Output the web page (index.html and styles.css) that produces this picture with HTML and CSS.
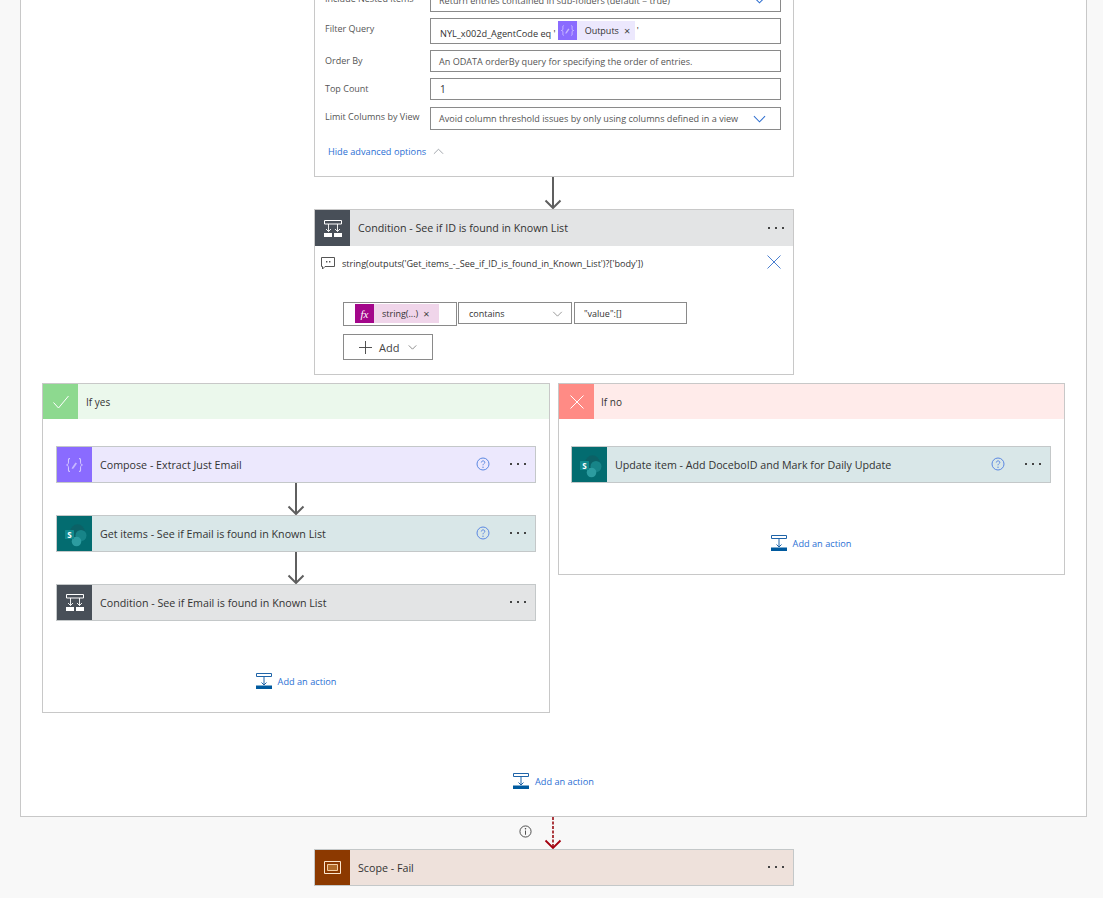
FILE: index.html
```html
<!DOCTYPE html>
<html lang="en">
<head>
<meta charset="utf-8">
<title>Flow designer</title>
<link rel="stylesheet" href="styles.css">
</head>
<body>
<svg class="defs" width="0" height="0" aria-hidden="true">
  <symbol id="i-condition" viewBox="0 0 18 17">
    <path d="M.5.5h17v3.500H.5z" fill="none" stroke="#fff"/>
    <path d="M4.500 4v7.500M13.500 4v7.500M2 9l2.500 2.500L7 9M11 9l2.500 2.500L16 9" fill="none" stroke="#fff" stroke-width=".9"/>
    <path d="M0 13h8v4H0zM10 13h8v4h-8z" fill="#fff"/>
  </symbol>
  <symbol id="i-compose" viewBox="0 0 17 14">
    <path d="M4 .5C2 .5 2.500 2 2.500 4S2.500 6.500.5 7c2 .5 2 1 2 3s-.5 3.500 1.500 3.500M13 .5c2 0 1.500 1.500 1.500 3.500s0 2.500 2 3c-2 .5-2 1-2 3s.5 3.500-1.500 3.500" fill="none" stroke="#d3c6ff" stroke-width="1.100"/>
    <path d="M6 9.500l3.500-5 1.500 1-3.500 5-1.800.6z" fill="#c6b6ff"/>
  </symbol>
  <symbol id="i-sharepoint" viewBox="0 0 26 26">
    <circle cx="15.500" cy="10.500" r="7.200" fill="#0b6166"/>
    <circle cx="19" cy="14.500" r="5.500" fill="#178488"/>
    <circle cx="14.500" cy="20.500" r="4.800" fill="#2c9ca0"/>
    <rect x="3" y="9" width="9" height="9" rx=".6" fill="#108a8e"/>
    <text x="7.500" y="16.500" text-anchor="middle" class="sp-letter">S</text>
  </symbol>
  <symbol id="i-add" viewBox="0 0 16 16">
    <path d="M.5.500h15v3H.5z" fill="none" stroke="#1f64a8"/>
    <path d="M8 4v8M5.500 9.500L8 12l2.500-2.500" fill="none" stroke="#1f64a8"/>
    <path d="M0 12.500h16V16H0z" fill="#005a9e"/>
  </symbol>
  <symbol id="i-help" viewBox="0 0 14 14">
    <circle cx="7" cy="7" r="6" fill="none" stroke="#5b88e2"/>
    <path d="M5.300 5.500C5.400 3.300 8.900 3.400 8.800 5.400 8.700 6.700 7 6.800 7 8.300" fill="none" stroke="#5b88e2"/>
    <circle cx="7" cy="10.200" r=".7" fill="#5b88e2"/>
  </symbol>
  <symbol id="i-down" viewBox="0 0 18 32">
    <path d="M9 0v31M1.500 23.500L9 31l7.500-7.500" fill="none" stroke="#5f5f5f" stroke-width="2"/>
  </symbol>
</svg>

<div class="page">
  <div class="scope">
    <section class="step fields">
      <div class="field">
        <span class="field-label">Include Nested Items</span>
        <div class="input input-select input-nested">
          <span class="placeholder">Return entries contained in sub-folders (default = true)</span>
          <svg class="chev" viewBox="0 0 14 8"><path d="M1 1l6 6 6-6" fill="none" stroke="#2f6fd0" stroke-width="1.100"/></svg>
        </div>
      </div>
      <div class="field field-filter">
        <span class="field-label">Filter Query</span>
        <div class="input input-filter">
          <span class="query">NYL_x002d_AgentCode eq '</span>
          <span class="pill pill-compose">
            <span class="pill-icon pill-icon-compose"><svg viewBox="0 0 17 14"><use href="#i-compose"/></svg></span>
            <span class="pill-text">Outputs</span><span class="pill-x">×</span>
          </span>
          <span class="query-end">'</span>
        </div>
      </div>
      <div class="field">
        <span class="field-label">Order By</span>
        <div class="input input-short"><span class="placeholder">An ODATA orderBy query for specifying the order of entries.</span></div>
      </div>
      <div class="field field-top">
        <span class="field-label">Top Count</span>
        <div class="input input-short"><span class="value">1</span></div>
      </div>
      <div class="field field-limit">
        <span class="field-label">Limit Columns by View</span>
        <div class="input input-select input-limit">
          <span class="placeholder">Avoid column threshold issues by only using columns defined in a view</span>
          <svg class="chev" viewBox="0 0 14 8"><path d="M1 1l6 6 6-6" fill="none" stroke="#2f6fd0" stroke-width="1.100"/></svg>
        </div>
      </div>
      <div class="advanced">
        <span>Hide advanced options</span>
        <svg class="chev-up" viewBox="0 0 12 7"><path d="M1 6l5-5 5 5" fill="none" stroke="#9aa0a6"/></svg>
      </div>
    </section>

    <div class="step connector connector-main"><svg class="arrow" viewBox="0 0 18 32"><use href="#i-down"/></svg></div>

    <section class="step condition">
      <header class="card-head head-condition">
        <span class="card-icon icon-condition"><svg class="ic-cond" viewBox="0 0 18 17"><use href="#i-condition"/></svg></span>
        <span class="card-title">Condition - See if ID is found in Known List</span>
        <span class="dots"><i></i><i></i><i></i></span>
      </header>
      <div class="comment">
        <svg class="comment-icon" viewBox="0 0 14 13"><path d="M.5.500h13v9H4l-2.500 2.500v-2.500h-1z" fill="none" stroke="#555"/><path d="M5 4h1.400v1.500H5zM8 4h1.400v1.500H8z" fill="#555"/></svg>
        <span class="comment-text">string(outputs('Get_items_-_See_if_ID_is_found_in_Known_List')?['body'])</span>
        <svg class="comment-x" viewBox="0 0 14 14"><path d="M.5.500l13 13M13.500.500l-13 13" stroke="#4a7fd0" fill="none"/></svg>
      </div>
      <div class="operands">
        <div class="operand operand-pill">
          <span class="pill pill-fx">
            <span class="pill-icon pill-icon-fx">fx</span>
            <span class="pill-text">string(...)</span><span class="pill-x">×</span>
          </span>
        </div>
        <div class="operand operand-op">
          <span>contains</span>
          <svg class="chev-grey" viewBox="0 0 12 7"><path d="M1 1l5 5 5-5" fill="none" stroke="#8a8a8a"/></svg>
        </div>
        <div class="operand operand-val">"value":[]</div>
      </div>
      <div class="add-btn">
        <svg class="plus" viewBox="0 0 14 14"><path d="M7 0v14M0 7h14" stroke="#444" fill="none"/></svg>
        <span>Add</span>
        <svg class="chev-add" viewBox="0 0 10 6"><path d="M.5.500L5 5 9.500.500" fill="none" stroke="#777"/></svg>
      </div>
    </section>

    <div class="branches">
      <section class="branch">
        <header class="branch-head head-yes">
          <span class="branch-icon icon-yes"><svg class="ic-branch" viewBox="0 0 16 13"><path d="M.5 7l5 5.500L15.500.500" fill="none" stroke="#fff"/></svg></span>
          <span class="branch-title">If yes</span>
        </header>
        <div class="branch-body">
          <article class="card-head action head-compose">
            <span class="card-icon icon-compose"><svg class="ic-compose" viewBox="0 0 17 14"><use href="#i-compose"/></svg></span>
            <span class="card-title">Compose - Extract Just Email</span>
            <svg class="help" viewBox="0 0 14 14"><use href="#i-help"/></svg>
            <span class="dots"><i></i><i></i><i></i></span>
          </article>
          <div class="inner-connector"><svg class="arrow" viewBox="0 0 18 32"><use href="#i-down"/></svg></div>
          <article class="card-head action head-sp">
            <span class="card-icon icon-sp"><svg class="ic-sp" viewBox="0 0 26 26"><use href="#i-sharepoint"/></svg></span>
            <span class="card-title">Get items - See if Email is found in Known List</span>
            <svg class="help" viewBox="0 0 14 14"><use href="#i-help"/></svg>
            <span class="dots"><i></i><i></i><i></i></span>
          </article>
          <div class="inner-connector"><svg class="arrow" viewBox="0 0 18 32"><use href="#i-down"/></svg></div>
          <article class="card-head action head-condition">
            <span class="card-icon icon-condition"><svg class="ic-cond" viewBox="0 0 18 17"><use href="#i-condition"/></svg></span>
            <span class="card-title">Condition - See if Email is found in Known List</span>
            <span class="dots"><i></i><i></i><i></i></span>
          </article>
          <div class="add-action"><svg class="add-icon" viewBox="0 0 16 16"><use href="#i-add"/></svg><span>Add an action</span></div>
        </div>
      </section>

      <section class="branch branch-no">
        <header class="branch-head head-no">
          <span class="branch-icon icon-no"><svg class="ic-branch" viewBox="0 0 14 14"><path d="M.5.500l13 13M13.500.500l-13 13" fill="none" stroke="#fff"/></svg></span>
          <span class="branch-title">If no</span>
        </header>
        <div class="branch-body">
          <article class="card-head action head-sp">
            <span class="card-icon icon-sp"><svg class="ic-sp" viewBox="0 0 26 26"><use href="#i-sharepoint"/></svg></span>
            <span class="card-title">Update item - Add DoceboID and Mark for Daily Update</span>
            <svg class="help" viewBox="0 0 14 14"><use href="#i-help"/></svg>
            <span class="dots"><i></i><i></i><i></i></span>
          </article>
          <div class="add-action"><svg class="add-icon" viewBox="0 0 16 16"><use href="#i-add"/></svg><span>Add an action</span></div>
        </div>
      </section>
    </div>

    <div class="add-action add-main"><svg class="add-icon" viewBox="0 0 16 16"><use href="#i-add"/></svg><span>Add an action</span></div>
  </div>

  <div class="step connector connector-main connector-fail">
    <svg class="info" viewBox="0 0 14 14"><circle cx="7" cy="7" r="6" fill="none" stroke="#444"/><path d="M7 6v4.500" stroke="#444"/><circle cx="7" cy="4" r=".8" fill="#444"/></svg>
    <svg class="arrow" viewBox="0 0 18 32"><path d="M9 0v30" fill="none" stroke="#a4262c" stroke-width="1.800" stroke-dasharray="3 1.500"/><path d="M1.500 23.500L9 31l7.500-7.500" fill="none" stroke="#a4000f" stroke-width="1.800"/></svg>
  </div>

  <article class="step card-head action head-scope">
    <span class="card-icon icon-scope"><svg class="ic-scope" viewBox="0 0 17 13"><path d="M.5.500h16v12H.5z" fill="none" stroke="#fbe6cf"/><path d="M3.500 3.500h10v6h-10z" fill="#b06a28" stroke="#f3cfa6"/></svg></span>
    <span class="card-title">Scope - Fail</span>
    <span class="dots"><i></i><i></i><i></i></span>
  </article>
</div>
</body>
</html>
```
FILE: styles.css
```css
* { box-sizing: border-box; }
html, body { margin: 0; padding: 0; }
body {
  background: #f8f8f8;
  font-family: "Open Sans", "Noto Sans", "Liberation Sans", sans-serif;
  font-size: 9px;
  color: #333;
}
.defs { position: absolute; }
.sp-letter { font: 700 8px "Open Sans", sans-serif; fill: #fff; }
.page { height: 898px; overflow: hidden; }

.scope {
  width: 1067px;
  margin: -60px 0 0 20px;
  background: #fff;
  border: 1px solid #c8c8c8;
  padding-bottom: 27px;
  display: flex;
  flex-direction: column;
  align-items: flex-start;
}
.step { width: 480px; margin-left: 293px; }
.page > .step { margin-left: 314px; }

.fields {
  border: 1px solid #c8c8c8;
  background: #fff;
  padding: 46px 12px 18px 10px;
  height: 236px;
  flex: none;
}
.field { display: flex; margin-bottom: 6px; }
.field-top { margin-bottom: 7px; }
.field-limit { margin-bottom: 13px; }
.field-label { width: 105px; flex: none; color: #555; padding-top: 4px; line-height: 14px; }
.field-filter .field-label { padding-top: 4px; }
.field-limit .field-label { padding-top: 3px; }
.input {
  width: 351px;
  height: 22px;
  border: 1px solid #8a8a8a;
  display: flex;
  align-items: center;
  padding-left: 8px;
}
.input-nested { height: 24px; }
.input-limit { height: 23px; }
.input-select { justify-content: space-between; padding-right: 14px; }
.input-filter { height: 26px; padding-left: 9px; }
.placeholder { color: #555; font-size: 9.100px; white-space: nowrap; }
.value { padding-left: 1px; font-size: 10px; }
.query { margin-top: 4px; color: #333; font-size: 9.200px; white-space: nowrap; }
.query-end { margin-left: 2px; margin-top: -2px; }
.chev { width: 13px; height: 8px; }

.pill { display: inline-flex; align-items: center; height: 19px; }
.pill-compose { width: 77px; background: #ece8fd; margin-left: 2px; margin-top: -2px; }
.pill-fx { width: 84px; background: #f0d5ea; margin-left: 11px; margin-top: -1px; }
.pill-icon { width: 19px; height: 19px; display: flex; align-items: center; justify-content: center; flex: none; }
.pill-icon svg { width: 13px; height: 11px; }
.pill-icon-compose { background: #8a6bff; }
.pill-icon-fx { background: #a3068a; color: #fff; font: italic 11px "Liberation Serif", serif; }
.pill-text { margin-left: 8px; white-space: nowrap; font-size: 9px; }
.pill-x { margin-left: 5px; font-size: 11px; color: #444; }

.advanced { display: flex; align-items: center; gap: 7px; margin-left: 3px; height: 16px; color: #2b6fd4; font-size: 9.200px; }
.chev-up { width: 11px; height: 7px; }

.connector { height: 32px; display: flex; justify-content: center; flex: none; position: relative; }
.connector-main { padding-right: 2px; }
.arrow { width: 18px; height: 32px; display: block; }
.connector-fail .info { position: absolute; left: 205px; top: 8px; width: 13px; height: 13px; }

.condition { height: 166px; border: 1px solid #c8c8c8; background: #fff; flex: none; }
.card-head { display: flex; align-items: center; height: 37px; }
.action { border: 1px solid #c4c8c9; width: 480px; flex: none; }
.condition > .card-head { height: 36px; }
.card-icon { width: 35px; height: 100%; display: flex; align-items: center; justify-content: center; flex: none; }
.card-title { margin-left: 8px; flex: 1; font-size: 10.700px; color: #333; white-space: nowrap; }
.head-condition { background: #e3e4e5; }
.icon-condition { background: #484f58; }
.head-compose { background: #ece8fd; }
.icon-compose { background: #8a6bff; }
.head-sp { background: #d9e7e8; }
.icon-sp { background: #036c70; }
.head-scope { background: #eee1db; }
.icon-scope { background: #8c3900; }
.ic-cond { width: 18px; height: 17px; }
.ic-compose { width: 17px; height: 14px; }
.ic-sp { width: 26px; height: 26px; }
.ic-scope { width: 17px; height: 13px; }
.help { width: 14px; height: 14px; margin-right: 20px; margin-top: -2px; }
.dots { display: flex; gap: 5px; margin-right: 9px; margin-top: -1px; }
.dots i { width: 2px; height: 2px; background: #444; display: block; }

.comment { display: flex; align-items: center; height: 18px; margin-top: 8px; padding: 0 12px 0 6px; }
.comment-icon { width: 14px; height: 13px; flex: none; }
.comment-text { margin-left: 7px; flex: 1; font-size: 9.100px; white-space: nowrap; }
.comment-x { width: 14px; height: 14px; margin-top: -2px; }

.operands { display: flex; align-items: flex-start; margin: 30px 0 0 28px; }
.operand { border: 1px solid #8a8a8a; height: 22px; width: 114px; margin-right: 1px; display: flex; align-items: center; font-size: 9px; }
.operand-pill { height: 24px; }
.operand-op { justify-content: space-between; padding: 1px 8px 0 10px; }
.operand-val { margin-left: 1px; width: 113px; padding: 0 9px; }
.chev-grey { width: 11px; height: 6px; }
.add-btn { display: flex; align-items: center; width: 90px; height: 26px; margin: 8px 0 0 28px; border: 1px solid #8a8a8a; padding-left: 15px; font-size: 11px; font-weight: 500; color: #444; }
.plus { width: 13px; height: 13px; margin-right: 7px; }
.chev-add { width: 9px; height: 5px; margin-left: 9px; }

.branches { display: grid; grid-template-columns: 508px 507px; gap: 8px; margin: 8px 0 0 21px; align-items: start; flex: none; }
.branch { border: 1px solid #c8c8c8; background: #fff; }
.branch-head { display: flex; align-items: center; height: 35px; }
.head-yes { background: #ebf8ec; }
.head-no { background: #ffebea; }
.branch-icon { width: 35px; height: 35px; display: flex; align-items: center; justify-content: center; }
.icon-yes { background: #8dd98f; }
.icon-no { background: #ff8b85; }
.ic-branch { width: 16px; height: 14px; }
.branch-title { margin-left: 8px; font-size: 10px; }
.branch-no .branch-title { margin-left: 7px; }
.branch-body { padding: 27px 13px 23px; }
.branch-no .branch-body { padding-left: 12px; }
.inner-connector { display: flex; justify-content: center; height: 32px; }

.add-action { display: flex; align-items: center; justify-content: center; gap: 6px; margin-top: 52px; height: 16px; color: #2b6fd4; font-size: 9.200px; }
.add-icon { width: 16px; height: 16px; }
.add-main { margin: 60px 0 0 492px; }
```
